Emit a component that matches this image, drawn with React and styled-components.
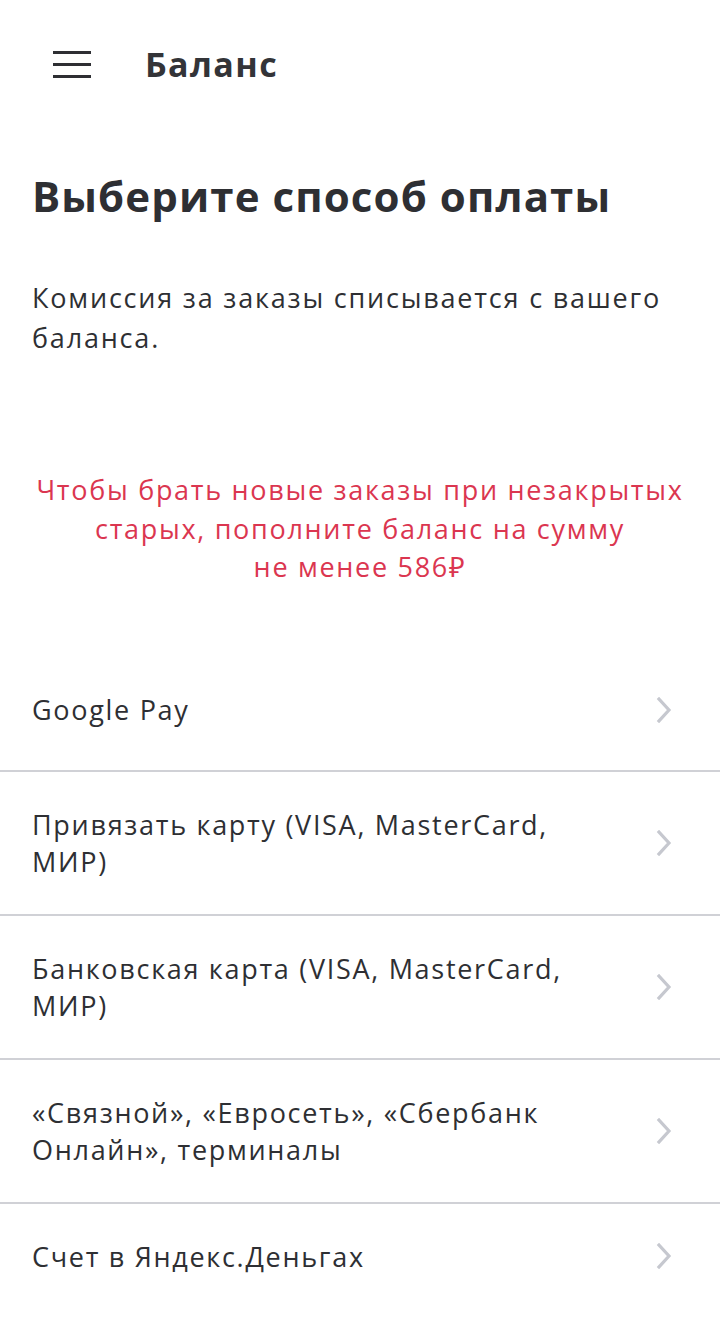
import React from 'react'
import styled, { createGlobalStyle } from 'styled-components'

const GlobalStyle = createGlobalStyle`
    html, body {
        margin: 0;
        padding: 0;
        background: #fff;
    }
    body {
        font-family: "Open Sans", "Noto Sans", sans-serif;
        color: #2e2f33;
    }
`

const methods = [
    'Google Pay',
    'Привязать карту (VISA, MasterCard, МИР)',
    'Банковская карта (VISA, MasterCard, МИР)',
    '«Связной», «Евросеть», «Сбербанк Онлайн», терминалы',
    'Счет в Яндекс.Деньгах',
]

const Chevron = () => (
    <svg width="16" height="26" viewBox="0 0 16 26" fill="none">
        <path d="M3 2 L13 13 L3 24" stroke="#c6c8cf" strokeWidth="3.2" strokeLinecap="square" />
    </svg>
)

export default function App() {
    return (
        <Page>
            <GlobalStyle />
            <Header>
                <MenuBtn>
                    <span />
                    <span />
                    <span />
                </MenuBtn>
                <HeaderTitle>Баланс</HeaderTitle>
            </Header>
            <Content>
                <Heading>Выберите способ оплаты</Heading>
                <Description>Комиссия за заказы списывается с вашего баланса.</Description>
                <Warning>
                    Чтобы брать новые заказы при незакрытых<br />
                    старых, пополните баланс на сумму<br />
                    не менее 586₽
                </Warning>
            </Content>
            <List>
                {methods.map(m => (
                    <Row key={m}>
                        <RowText>{m}</RowText>
                        <Chevron />
                    </Row>
                ))}
            </List>
        </Page>
    )
}

const Page = styled.div`
    width: 720px;
    min-height: 1320px;
    background: #fff;
    overflow: hidden;
`

const Header = styled.div`
    height: 128px;
    display: flex;
    align-items: center;
    padding-left: 53px;
    box-sizing: border-box;
`

const MenuBtn = styled.div`
    width: 38px;
    display: flex;
    flex-direction: column;
    gap: 9px;
    margin-right: 54px;
    span {
        display: block;
        height: 3px;
        background: #2e2f33;
    }
`

const HeaderTitle = styled.div`
    font-size: 34px;
    font-weight: 700;
    color: #333438;
    letter-spacing: 1.4px;
`

const Content = styled.div`
    padding: 44px 32px 0;
`

const Heading = styled.h1`
    margin: 0;
    font-size: 42px;
    line-height: 48px;
    font-weight: 700;
    color: #2e2f33;
    letter-spacing: 1.1px;
    white-space: nowrap;
`

const Description = styled.p`
    margin: 58px 0 0;
    font-size: 27px;
    line-height: 40px;
    color: #2e2f33;
    letter-spacing: 1.8px;
`

const Warning = styled.p`
    margin: 113px -20px 0;
    font-size: 27px;
    line-height: 38.5px;
    color: #db3650;
    letter-spacing: 1.7px;
    text-align: center;
    white-space: nowrap;
`

const List = styled.div`
    margin-top: 63px;
`

const Row = styled.div`
    display: flex;
    align-items: center;
    justify-content: space-between;
    min-height: 122px;
    padding: 34px 48px 34px 32px;
    box-sizing: border-box;
    border-bottom: 2px solid #d0d1d6;
    &:last-child {
        border-bottom: none;
        min-height: 0;
    }
`

const RowText = styled.div`
    font-size: 27px;
    line-height: 37px;
    color: #2e2f33;
    letter-spacing: 1.7px;
    max-width: 570px;
`
